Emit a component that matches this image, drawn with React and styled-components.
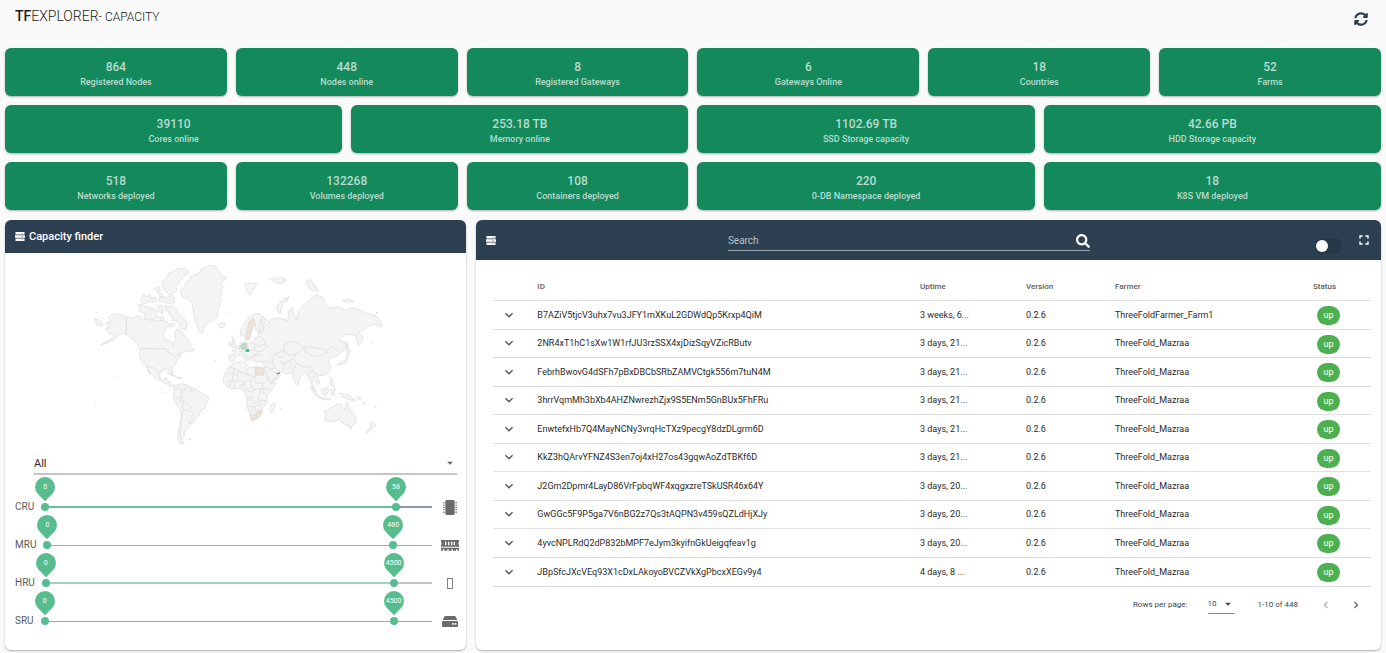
import React, { useState } from "react";
import styled, { createGlobalStyle } from "styled-components";
import { FaSyncAlt, FaSearch } from "react-icons/fa";
import { MdExpandMore, MdFullscreen, MdChevronLeft, MdChevronRight, MdArrowDropDown } from "react-icons/md";

const Global = createGlobalStyle`
  * { box-sizing: border-box; }
  body {
    margin: 0;
    background: #fafafa;
    color: #2a2a2a;
    font-family: Roboto, "Liberation Sans", sans-serif;
  }
  button, input, select { font: inherit; color: inherit; }
`;

const Page = styled.div`
  padding: 0 5px 3px;
`;

const TopBar = styled.header`
  display: flex;
  align-items: center;
  justify-content: space-between;
  height: 48px;
  padding: 0 13px 10px 10px;
`;

const Title = styled.h1`
  margin: 0;
  padding-bottom: 5px;
  font-size: 14px;
  line-height: 20px;
  font-weight: 300;
  color: #1a1a1a;
  strong { font-weight: 500; }
  small { font-size: 12px; }
`;

const IconButton = styled.button`
  display: inline-flex;
  align-items: center;
  justify-content: center;
  padding: 0;
  border: 0;
  background: none;
  color: ${(p) => p.$color || "#555"};
  font-size: ${(p) => p.$size || 14}px;
  cursor: pointer;
`;

const Stats = styled.section`
  display: grid;
  grid-template-columns: repeat(12, minmax(0, 1fr));
  gap: 9px;
`;

const StatCard = styled.div`
  grid-column: span ${(p) => p.$span};
  display: flex;
  flex-direction: column;
  align-items: center;
  height: 48px;
  padding-top: 11px;
  border-radius: 6px;
  background: #14895c;
  color: #b8dccd;
  box-shadow: 0 1px 2px rgba(0, 0, 0, 0.3);
`;

const StatValue = styled.div`
  font-size: 12px;
  line-height: 16px;
  font-weight: 500;
`;

const StatLabel = styled.div`
  font-size: 9px;
  line-height: 14px;
  font-weight: 500;
`;

const Panels = styled.main`
  display: grid;
  grid-template-columns: minmax(0, 51fr) minmax(0, 100fr);
  gap: 10px;
  margin-top: 10px;
`;

const Panel = styled.section`
  border-radius: 6px;
  overflow: hidden;
  background: #fff;
  box-shadow: 0 1px 2px rgba(0, 0, 0, 0.3);
`;

const FinderHeader = styled.header`
  display: flex;
  align-items: center;
  gap: 4px;
  height: 33px;
  padding: 0 10px;
  background: #2d4052;
  color: #fff;
  h2 { margin: 0; font-size: 11px; line-height: 16px; font-weight: 500; }
`;

const FinderBody = styled.div`
  display: flex;
  flex-direction: column;
  padding: 0 7px 10px 10px;
`;

const MapDrawing = styled.svg`
  display: block;
  align-self: center;
  width: 320px;
  height: 200px;
  max-width: 100%;
`;

const CountrySelect = styled.div`
  display: flex;
  align-items: center;
  position: relative;
  height: 22px;
  margin: 0 2px 13px 19px;
  border-bottom: 2px solid #c6c6c6;
  select {
    flex: 1;
    height: 20px;
    padding: 0;
    border: 0;
    outline: 0;
    background: none;
    appearance: none;
    font-size: 11px;
  }
  svg { position: absolute; right: 0; pointer-events: none; color: #666; }
`;

const SliderRow = styled.div`
  display: flex;
  align-items: center;
  height: 38px;
  gap: 9px;
`;

const SliderLabel = styled.span`
  margin-right: 2px;
  font-size: 10px;
  line-height: 16px;
  color: #5c5c5c;
`;

const SliderTrack = styled.div`
  position: relative;
  flex: 1;
  height: ${(p) => p.$thickness}px;
  background: ${(p) => p.$rest};
`;

const SliderFill = styled.div`
  height: 100%;
  background: ${(p) => p.$color};
`;

const RangeInput = styled.input`
  position: absolute;
  top: 50%;
  left: -4px;
  width: calc(100% + 8px);
  height: 8px;
  margin: -4px 0 0;
  background: none;
  appearance: none;
  pointer-events: none;
  &::-webkit-slider-thumb {
    appearance: none;
    width: 8px;
    height: 8px;
    border-radius: 50%;
    background: #57bd8e;
    pointer-events: auto;
  }
`;

const Pin = styled.output`
  position: absolute;
  bottom: 11px;
  z-index: 1;
  width: 20px;
  height: 20px;
  margin-left: -10px;
  color: #fff;
  font-size: 7px;
  line-height: 20px;
  text-align: center;
  &::before {
    content: "";
    position: absolute;
    inset: 0;
    z-index: -1;
    border-radius: 50% 50% 0;
    background: #57bd8e;
    transform: rotate(45deg);
  }
`;

const SliderIcon = styled.span`
  display: flex;
  align-items: center;
  justify-content: center;
  width: 18px;
  color: #6b6b6b;
`;

const TableHeader = styled.header`
  display: grid;
  grid-template-columns: 24fr 36fr 28fr;
  height: 40px;
  padding: 0 9px 0 10px;
  background: #2d4052;
  color: #fff;
`;

const HeaderIcon = styled.span`
  align-self: center;
  display: flex;
`;

const SearchField = styled.label`
  display: flex;
  align-items: center;
  align-self: end;
  height: 20px;
  margin-bottom: 9px;
  border-bottom: 1px solid #98a2ac;
  input {
    flex: 1;
    min-width: 0;
    height: 18px;
    padding: 0;
    border: 0;
    outline: 0;
    background: none;
    font-size: 10px;
    &::placeholder { color: #b9c1c8; opacity: 1; }
  }
`;

const HeaderActions = styled.div`
  display: flex;
  justify-content: flex-end;
  align-items: center;
  gap: 14px;
`;

const Switch = styled.input`
  appearance: none;
  width: 27px;
  height: 16px;
  margin: 12px 0 0;
  padding: 2px 1px;
  border-radius: 8px;
  background: #263746;
  cursor: pointer;
  &::before {
    content: "";
    display: block;
    width: 12px;
    height: 12px;
    border-radius: 50%;
    background: #fff;
  }
  &:checked::before { margin-left: auto; }
`;

const TableArea = styled.div`
  padding: 12px 10px 0 17px;
`;

const NodeTable = styled.table`
  width: 100%;
  table-layout: fixed;
  border-collapse: collapse;
  font-size: 9px;
  line-height: 12px;
  th, td {
    padding: 0 8px;
    border-bottom: 1px solid #dedede;
    text-align: left;
    white-space: nowrap;
  }
  thead tr { height: 28px; }
  th { padding-top: 2px; font-size: 8px; font-weight: 500; color: #5c5c5c; }
  tbody tr { height: 29px; }
  tbody tr:nth-child(even):not(:last-child) { height: 28px; }
  td > button { display: flex; }
`;

const Col = styled.col`
  width: ${(p) => p.$width}px;
`;

const StatusChip = styled.span`
  display: block;
  width: 23px;
  height: 19px;
  margin: 2px 0 0 4px;
  border-radius: 10px;
  background: #4caf50;
  color: #fff;
  font-size: 9px;
  line-height: 19px;
  text-align: center;
`;

const Pagination = styled.footer`
  display: flex;
  align-items: center;
  justify-content: flex-end;
  height: 36px;
  padding-right: 8px;
  color: #444;
  font-size: 8px;
  line-height: 12px;
`;

const PageSize = styled.span`
  display: flex;
  align-items: center;
  position: relative;
  width: 27px;
  height: 19px;
  margin: 0 23px 0 20px;
  border-bottom: 1px solid #8c8c8c;
  select {
    width: 100%;
    padding: 0;
    border: 0;
    outline: 0;
    background: none;
    appearance: none;
    font-size: 8px;
  }
  svg { position: absolute; right: 0; pointer-events: none; }
`;

const Pager = styled.nav`
  display: flex;
  gap: 16px;
  margin-left: 21px;
`;

const stats = [
  ["864", "Registered Nodes", 2],
  ["448", "Nodes online", 2],
  ["8", "Registered Gateways", 2],
  ["6", "Gateways Online", 2],
  ["18", "Countries", 2],
  ["52", "Farms", 2],
  ["39110", "Cores online", 3],
  ["253.18 TB", "Memory online", 3],
  ["1102.69 TB", "SSD Storage capacity", 3],
  ["42.66 PB", "HDD Storage capacity", 3],
  ["518", "Networks deployed", 2],
  ["132268", "Volumes deployed", 2],
  ["108", "Containers deployed", 2],
  ["220", "0-DB Namespace deployed", 3],
  ["18", "K8S VM deployed", 3],
];

const nodes = [
  ["B7AZiV5tjcV3uhx7vu3JFY1mXKuL2GDWdQp5Krxp4QiM", "3 weeks, 6...", "ThreeFoldFarmer_Farm1"],
  ["2NR4xT1hC1sXw1W1rfJU3rzSSX4xjDizSqyVZicRButv", "3 days, 21...", "ThreeFold_Mazraa"],
  ["FebrhBwovG4dSFh7pBxDBCbSRbZAMVCtgk556m7tuN4M", "3 days, 21...", "ThreeFold_Mazraa"],
  ["3hrrVqmMh3bXb4AHZNwrezhZjx9S5ENm5GnBUx5FhFRu", "3 days, 21...", "ThreeFold_Mazraa"],
  ["EnwtefxHb7Q4MayNCNy3vrqHcTXz9pecgY8dzDLgrm6D", "3 days, 21...", "ThreeFold_Mazraa"],
  ["KkZ3hQArvYFNZ4S3en7oj4xH27os43gqwAoZdTBKf6D", "3 days, 21...", "ThreeFold_Mazraa"],
  ["J2Gm2Dpmr4LayD86VrFpbqWF4xqgxzreTSkUSR46x64Y", "3 days, 20...", "ThreeFold_Mazraa"],
  ["GwGGc5F9P5ga7V6nBG2z7Qs3tAQPN3v459sQZLdHjXJy", "3 days, 20...", "ThreeFold_Mazraa"],
  ["4yvcNPLRdQ2dP832bMPF7eJym3kyifnGkUeigqfeav1g", "3 days, 20...", "ThreeFold_Mazraa"],
  ["JBpSfcJXcVEq93X1cDxLAkoyoBVCZVkXgPbcxXEGv9y4", "4 days, 8 ...", "ThreeFold_Mazraa"],
];

const ServerIcon = () => (
  <svg width="10" height="9" viewBox="0 0 20 18" aria-hidden="true">
    <path fill="#fff" d="M1 0h18v5H1zM0 6.500h20v5H0zM1 13h18v5H1z" />
    <path fill="#7d8a96" d="M13 1.500h2v2h-2zM13 8h2v2h-2zM13 14.500h2v2h-2z" />
  </svg>
);

const ChipIcon = () => (
  <svg width="14" height="15" viewBox="0 0 42 45" fill="currentColor" aria-hidden="true">
    <rect x="7" y="0" width="28" height="45" rx="4" />
    <path d="M0 7h5v3H0zM0 14h5v3H0zM0 21h5v3H0zM0 28h5v3H0zM0 35h5v3H0zM37 7h5v3h-5zM37 14h5v3h-5zM37 21h5v3h-5zM37 28h5v3h-5zM37 35h5v3h-5z" />
  </svg>
);

const MemoryIcon = () => (
  <svg width="18" height="11" viewBox="0 0 54 33" fill="currentColor" aria-hidden="true">
    <path
      fillRule="evenodd"
      d="M0 0h54v7a4 4 0 0 0 0 7v6H0v-6a4 4 0 0 0 0-7zM12 5v11h4V5zM21 5v11h4V5zM30 5v11h4V5zM38 5v11h4V5z"
    />
    <path d="M0 23h54v9h-5v-4h-4v4h-9v-4h-4v4h-9v-4h-4v4h-9v-4H6v4H0z" />
  </svg>
);

const EmptyGlyphIcon = () => (
  <svg width="6" height="11" viewBox="0 0 6 11" aria-hidden="true">
    <rect x=".5" y=".5" width="5" height="10" fill="none" stroke="#858585" />
  </svg>
);

const DriveIcon = () => (
  <svg width="16" height="11" viewBox="0 0 48 33" fill="currentColor" aria-hidden="true">
    <path d="M10 0h28q2 0 3 2l5 10H2L7 2q1-2 3-2z" />
    <path
      fillRule="evenodd"
      d="M3 15h42q3 0 3 3v11q0 4-4 4H4q-4 0-4-4V18q0-3 3-3zM30 21v5h5v-5zM38 21v5h5v-5z"
    />
  </svg>
);

const sliders = [
  { name: "CRU", high: 58, max: 64, thickness: 2, fill: "#68c096", rest: "#8d99ad", icon: <ChipIcon /> },
  { name: "MRU", high: 460, max: 512, thickness: 1, fill: "#68c79c", rest: "#9aa6bb", icon: <MemoryIcon /> },
  { name: "HRU", high: 4500, max: 5000, thickness: 2, fill: "#9dd3b9", rest: "#bcc4d1", icon: <EmptyGlyphIcon /> },
  { name: "SRU", high: 4500, max: 5000, thickness: 1, fill: "#68c79c", rest: "#9aa6bb", icon: <DriveIcon /> },
];

const land = [
  // Greenland and Iceland
  "M300 108 318 96 316 85 332 72 330 66 345 60 362 50 360 42 378 38 384 32 400 31 410 36 408 44 420 50 424 62 440 68 430 80 422 84 430 98 422 106 426 118 418 126 424 138 416 146 420 156 412 160 416 172 410 182 414 188 402 190 392 200 380 206 372 218 368 236 358 232 350 212 344 190 340 165 335 145 325 132 308 128Z",
  "M412 208 420 206 425 203 437 208 432 216 420 219Z",
  // Canadian Arctic
  "M248 78 262 68 266 54 280 50 295 40 316 41 327 50 314 60 306 70 300 80 287 92 290 108 278 114 275 122 262 116 254 104 246 98Z",
  "M182 132 192 118 198 126 210 120 214 130 226 128 230 138 216 142 204 140 196 146 184 142Z",
  "M222 100 236 96 242 106 232 110ZM232 112 246 116 250 126 240 124ZM236 128 256 126 282 126 284 142 270 146 252 142 238 138Z",
  "M176 150 186 148 196 156 212 158 226 164 228 178 234 188 218 194 198 192 190 184 196 176 180 170Z",
  "M232 154 246 150 250 162 246 176 236 170ZM256 152 268 154 280 152 292 166 298 178 312 190 322 206 318 224 306 222 298 214 300 206 288 198 276 196 278 186 268 178 264 168 256 164Z",
  "M238 184 250 186 252 196 242 198ZM270 206 284 206 282 214 272 216Z",
  // Alaska, Canada, USA, Mexico
  "M139 185 128 180 114 178 100 175 85 188 92 198 78 204 90 213 76 222 86 236 104 240 95 252 75 262 60 270 78 266 100 255 118 240 130 234 139 238Z",
  "M139 185 160 190 175 182 190 192 215 198 235 196 262 200 270 212 252 228 250 245 262 256 275 260 280 272 287 250 284 235 290 222 302 225 312 240 320 250 335 268 330 276 343 285 325 292 318 286 310 292 295 300 283 306 275 296 262 290 255 283 180 281 172 270 158 250 139 238Z",
  "M180 281H255L262 290 275 296 283 306 295 300 303 298 300 306 290 318 285 330 275 338 278 355 270 352 262 343 245 346 240 356 225 342 215 336 198 334 185 322 178 300Z",
  "M198 334 215 336 225 342 240 356 240 370 252 374 258 366 264 378 275 385 285 392 278 396 262 388 245 378 225 370 218 360 203 345 210 358Z",
  "M262 354 276 358 290 364 280 364ZM292 366 306 368 304 371 292 370ZM46 190 58 196 70 208 62 214 48 206Z",
  // South America
  "M283 396 290 390 305 386 320 390 335 398 350 404 362 412 385 425 387 432 378 445 375 460 362 468 356 482 344 496 332 506 328 516 314 528 312 545 306 555 312 566 300 566 293 550 295 530 300 510 303 490 303 465 290 450 280 430 283 415Z",
  // British Isles
  "M456 244 462 250 464 262 472 274 462 278 454 276 458 262ZM446 262 453 262 453 272 446 273Z",
  // Scandinavia
  "M482 240 480 228 492 208 504 190 520 178 538 175 548 184 544 196 552 214 546 230 532 232 526 220 528 208 520 214 514 234 508 252 498 256 492 240Z",
  // Eurasia
  "M447 318 446 302 462 300 458 286 474 280 480 268 490 262 500 264 520 262 524 250 536 244 536 234 548 230 552 216 542 200 548 184 562 196 550 206 565 208 568 195 585 190 605 190 624 198 626 168 636 158 642 180 650 194 656 166 668 152 686 136 708 120 728 126 734 144 750 160 775 156 800 166 814 158 832 162 850 170 870 178 890 184 905 205 902 216 880 208 862 214 850 224 838 232 848 245 848 258 836 270 830 255 830 240 815 240 794 238 778 256 796 262 800 280 786 290 772 302 758 308 752 304 745 318 752 335 750 348 735 360 718 362 712 360 714 372 720 384 712 390 702 376 696 376 700 396 708 408 698 398 690 376 684 364 674 352 662 366 656 378 654 394 648 388 640 368 634 354 618 356 602 350 588 342 576 340 582 352 595 352 602 358 594 370 572 384 564 368 554 344 552 332 550 318 534 322 522 318 520 306 528 300 516 304 512 318 506 312 500 300 494 302 504 314 498 318 488 300 476 300 468 308 462 318Z",
  // Africa
  "M455 328 470 322 495 320 500 332 515 338 528 335 550 338 556 350 565 375 572 385 588 383 580 400 562 420 562 440 547 462 546 475 530 492 515 497 510 480 501 455 500 430 492 405 478 400 455 402 442 395 430 380 432 360 440 345Z",
  "M570 470 568 458 580 442 587 450 578 472Z",
  // Arctic islands
  "M494 88 510 84 530 86 526 98 516 106 512 120 502 112ZM572 74 584 68 590 76 604 66 614 70 618 78 600 86 586 82Z",
  "M680 80 690 72 704 90 716 108 704 108 690 104 684 96ZM594 172 590 156 604 138 628 124 624 134 608 146 602 166 600 178ZM786 136 808 132 822 140 800 142Z",
  // Japan, South-East Asia, New Guinea
  "M772 328 786 320 798 312 802 296 806 302 800 322 782 330ZM798 288 808 282 812 290 802 296ZM798 262 804 270 802 284 798 276Z",
  "M692 396 704 406 716 424 710 424 698 408ZM714 426 736 430 754 432 752 435 730 434ZM724 404 742 398 748 406 738 420 726 416ZM750 366 758 376 762 392 764 400 752 390 752 374ZM752 404 768 404 760 408 764 422 754 420Z",
  "M778 414 790 418 806 420 822 432 830 436 812 436 798 430 784 424ZM830 424 844 430 836 434ZM848 440 860 450 850 446Z",
  // Australia, New Zealand
  "M734 468 748 460 762 454 772 446 784 448 786 458 796 462 800 442 806 452 812 466 826 482 828 496 820 512 806 516 796 508 786 504 780 494 760 498 740 502 734 492 738 482ZM808 518 816 518 812 524Z",
  "M872 500 884 506 886 514 872 522ZM858 532 872 518 870 526 862 535Z",
];

const borders = [
  "M450 335 462 340 480 350 472 360 455 352 440 360 M462 340 456 378 438 380 M480 350 500 358 502 340 M500 358 526 366 V338 M472 360 476 378 456 378 M476 378 494 380 512 374 526 360 M450 380 448 396 M462 378 464 400 M494 380 496 402 512 396 526 402 M526 366 528 384 546 386 560 376 M512 374 514 396 M546 386 550 400 566 402 M526 402 540 402 550 400 548 414 560 420 M500 408 514 410 526 402 M500 428 516 428 518 440 528 444 536 436 534 420 M536 436 550 436 560 438 M502 454 524 456 534 448 544 446 M524 456 530 470 540 464 M514 476 520 460 M540 402 538 418 M534 448 546 460 M496 390 484 388 482 400",
  "M483 420 M290 390 300 404 316 404 320 390 M316 404 304 410 306 424 294 430 284 428 M306 424 302 440 312 438 330 456 332 470 342 476 334 486 340 496 M312 438 306 452 312 466 328 466 M308 470 304 500 300 540 304 556 M330 490 328 506 344 500 M328 396 332 408 346 406",
  "M520 262 528 272 522 284 504 286 500 264 M528 272 540 274 552 268 562 276 548 288 530 290 522 284 M536 244 552 252 556 266 M530 290 526 300 542 300 M504 286 496 292 480 288 478 276 M566 300 590 296 612 286 M584 296 596 308 612 304 M612 270 624 262 640 260 660 268 672 280 664 290 648 296 628 302 612 290Z M672 280 690 276 712 280 738 286 742 294 718 304 694 302 678 292Z M738 286 760 276 774 288 M648 296 642 310 650 326 672 336 692 334 700 350 712 360 M636 354 640 340 650 326 M580 304 580 326 586 340 M600 320 612 324 626 318 642 312 M612 324 610 348 M626 318 636 330 620 344 M553 318 572 322 580 326 M556 336 570 340 576 348 M684 364 690 346 700 350 M696 366 706 364 M574 378 590 366 596 356 M542 196 538 230",
];

const CapacityMap = () => (
  <MapDrawing viewBox="-9 -6 960 600" role="img" aria-label="Farms by country">
    <g fill="#f4f4f4" stroke="#d9d9d9" strokeWidth="2" strokeLinejoin="round">
      {land.map((d) => (
        <path key={d} d={d} />
      ))}
      {borders.map((d) => (
        <path key={d} d={d} fill="none" />
      ))}
      <path fill="#efe2d6" d="M497 253 500 235 498 224 508 200 520 190 525 200 518 220 510 234 512 248 504 256Z" />
      <path fill="#efe2d6" d="M527 338 548 338 552 360 527 360Z" />
      <path fill="#efe2d6" d="M510 480 520 480 532 472 544 464 546 474 534 490 515 497Z" />
      <path fill="#bfdac3" d="M486 266 496 262 501 268 500 282 488 286 478 276Z" />
    </g>
    <path fill="#2dab78" d="M496 286 504 282 508 285 507 290 498 290ZM588 354 596 354 600 349 599 357 592 358Z" />
    <g fill="#dadada">
      <circle cx="50" cy="172" r="2" />
      <circle cx="103" cy="364" r="2" />
      <circle cx="45" cy="451" r="2" />
      <circle cx="254" cy="412" r="2" />
      <circle cx="330" cy="553" r="3" />
      <circle cx="406" cy="317" r="2" />
      <circle cx="449" cy="175" r="2" />
      <circle cx="891" cy="173" r="3" />
      <circle cx="876" cy="262" r="2" />
      <circle cx="886" cy="455" r="3" />
      <circle cx="602" cy="460" r="2" />
    </g>
  </MapDrawing>
);

function ResourceSlider({ name, high, max, thickness, fill, rest, icon }) {
  const [low, setLow] = useState(0);
  const [top, setTop] = useState(high);
  const percent = (value) => `${(value / max) * 100}%`;
  return (
    <SliderRow>
      <SliderLabel>{name}</SliderLabel>
      <SliderTrack $thickness={thickness} $rest={rest}>
        <SliderFill $color={fill} style={{ marginLeft: percent(low), width: percent(top - low) }} />
        <RangeInput
          type="range"
          aria-label={`${name} minimum`}
          max={max}
          value={low}
          onChange={(e) => setLow(Math.min(top, Number(e.target.value)))}
        />
        <RangeInput
          type="range"
          aria-label={`${name} maximum`}
          max={max}
          value={top}
          onChange={(e) => setTop(Math.max(low, Number(e.target.value)))}
        />
        <Pin style={{ left: percent(low) }}>{low}</Pin>
        <Pin style={{ left: percent(top) }}>{top}</Pin>
      </SliderTrack>
      <SliderIcon>{icon}</SliderIcon>
    </SliderRow>
  );
}

export default function App() {
  return (
    <Page>
      <Global />
      <TopBar>
        <Title>
          <strong>TF</strong>EXPLORER<small>- CAPACITY</small>
        </Title>
        <IconButton type="button" aria-label="Refresh" $color="#2d4052">
          <FaSyncAlt />
        </IconButton>
      </TopBar>
      <Stats>
        {stats.map(([value, label, span]) => (
          <StatCard key={label} $span={span}>
            <StatValue>{value}</StatValue>
            <StatLabel>{label}</StatLabel>
          </StatCard>
        ))}
      </Stats>
      <Panels>
        <Panel>
          <FinderHeader>
            <ServerIcon />
            <h2>Capacity finder</h2>
          </FinderHeader>
          <FinderBody>
            <CapacityMap />
            <CountrySelect>
              <select aria-label="Country">
                <option>All</option>
              </select>
              <MdArrowDropDown size={14} />
            </CountrySelect>
            {sliders.map((s) => (
              <ResourceSlider key={s.name} {...s} />
            ))}
          </FinderBody>
        </Panel>
        <Panel>
          <TableHeader>
            <HeaderIcon>
              <ServerIcon />
            </HeaderIcon>
            <SearchField>
              <input type="text" placeholder="Search" aria-label="Search" />
              <FaSearch size={14} />
            </SearchField>
            <HeaderActions>
              <Switch type="checkbox" role="switch" aria-label="Show offline nodes" />
              <IconButton type="button" aria-label="Full screen" $color="#fff" $size={16}>
                <MdFullscreen />
              </IconButton>
            </HeaderActions>
          </TableHeader>
          <TableArea>
            <NodeTable>
              <colgroup>
                <Col $width={36} />
                <col />
                <Col $width={106} />
                <Col $width={89} />
                <Col $width={198} />
                <Col $width={66} />
              </colgroup>
              <thead>
                <tr>
                  <th aria-label="Expand" />
                  <th>ID</th>
                  <th>Uptime</th>
                  <th>Version</th>
                  <th>Farmer</th>
                  <th>Status</th>
                </tr>
              </thead>
              <tbody>
                {nodes.map(([id, uptime, farmer]) => (
                  <tr key={id}>
                    <td>
                      <IconButton type="button" aria-label="Show details" $size={16}>
                        <MdExpandMore />
                      </IconButton>
                    </td>
                    <td>{id}</td>
                    <td>{uptime}</td>
                    <td>0.2.6</td>
                    <td>{farmer}</td>
                    <td>
                      <StatusChip>up</StatusChip>
                    </td>
                  </tr>
                ))}
              </tbody>
            </NodeTable>
            <Pagination>
              <label htmlFor="page-size">Rows per page:</label>
              <PageSize>
                <select id="page-size">
                  <option>10</option>
                </select>
                <MdArrowDropDown size={14} />
              </PageSize>
              <span>1-10 of 448</span>
              <Pager aria-label="Pages">
                <IconButton type="button" aria-label="Previous page" $color="#aaa">
                  <MdChevronLeft />
                </IconButton>
                <IconButton type="button" aria-label="Next page">
                  <MdChevronRight />
                </IconButton>
              </Pager>
            </Pagination>
          </TableArea>
        </Panel>
      </Panels>
    </Page>
  );
}
